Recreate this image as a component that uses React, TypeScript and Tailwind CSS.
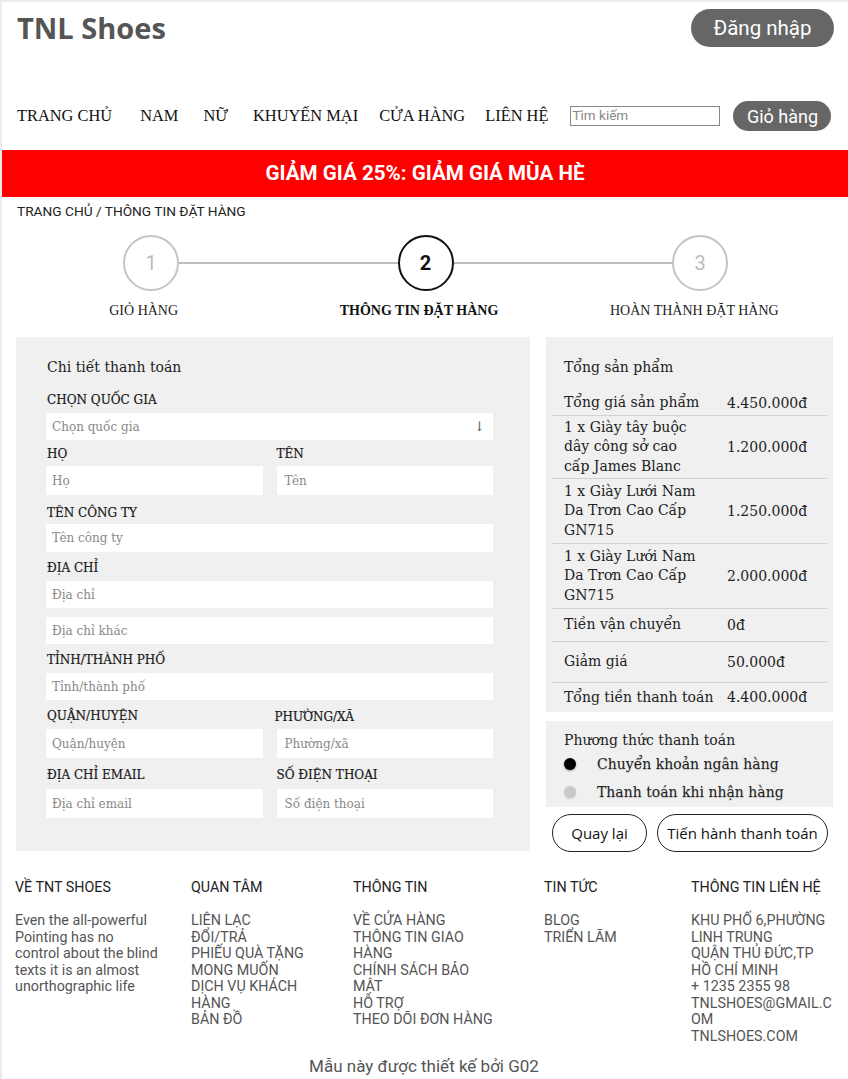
import React from "react";

const serif = "font-['DejaVu_Serif',serif]";
const times = "font-['Liberation_Serif',serif]";
const roboto = "font-['Roboto',sans-serif]";

function Label({ children, className = "" }: { children: React.ReactNode; className?: string }) {
  return (
    <div className={`${serif} text-[12px] leading-[16px] text-[#1a1a1a] [-webkit-text-stroke:0.2px_#1a1a1a] ${className}`}>{children}</div>
  );
}

function Field({ ph, h = 27, className = "" }: { ph: string; h?: number; className?: string }) {
  return (
    <div
      className={`bg-white flex items-center pl-[6px] ${serif} text-[12px] text-[#888] ${className}`}
      style={{ height: h }}
    >
      {ph}
    </div>
  );
}

function Row({ name, value, h, last = false }: { name: React.ReactNode; value: string; h: number; last?: boolean }) {
  return (
    <div
      className={`mx-[6px] px-[12px] flex items-center box-border ${last ? "" : "border-b border-[#d2d2d2]"}`}
      style={{ height: h }}
    >
      <div className="w-[163px] leading-[19.5px]">{name}</div>
      <div>{value}</div>
    </div>
  );
}

export default function App() {
  return (
    <div className="w-[848px] min-h-[1079px] bg-white border-t-2 border-l-2 border-[#ececec] box-border text-[#111]">
      {/* header */}
      <div className="flex justify-between items-center pl-[15px] pr-[14px] pt-[7px]">
        <div className="font-['Open_Sans',sans-serif] font-bold text-[29px] leading-[38px] text-[#555]">
          TNL Shoes
        </div>
        <div className={`w-[143px] h-[38px] rounded-full bg-[#666] text-white flex items-center justify-center ${roboto} text-[20.5px]`}>
          Đăng nhập
        </div>
      </div>

      {/* nav */}
      <div className="mt-[54px] flex items-center h-[30px] pl-[15px]">
        <div className={`flex items-center ${times} text-[16.4px] text-[#111]`}>
          <span className="mr-[28px]">TRANG CHỦ</span>
          <span className="mr-[25px]">NAM</span>
          <span className="mr-[25px]">NỮ</span>
          <span className="mr-[21px]">KHUYẾN MẠI</span>
          <span className="mr-[20px]">CỬA HÀNG</span>
          <span>LIÊN HỆ</span>
        </div>
        <div className={`ml-[22px] w-[150px] h-[20px] border border-[#888] flex items-center pl-[1px] ${roboto} text-[13.5px] text-[#888] leading-none`}>
          Tìm kiếm
        </div>
        <div className={`ml-[13px] w-[98px] h-[30px] rounded-full bg-[#666] text-white flex items-center justify-center ${roboto} text-[18px]`}>
          Giỏ hàng
        </div>
      </div>

      {/* banner */}
      <div className={`mt-[19px] h-[47px] bg-[#ff0000] text-white flex items-center justify-center ${roboto} font-bold text-[20.6px]`}>
        GIẢM GIÁ 25%: GIẢM GIÁ MÙA HÈ
      </div>

      {/* breadcrumb */}
      <div className={`mt-[6px] pl-[15px] ${roboto} text-[13.7px] leading-[16px] text-[#222]`}>
        TRANG CHỦ / THÔNG TIN ĐẶT HÀNG
      </div>

      {/* stepper */}
      <div className="mt-[16px] ml-[121px] w-[605px] flex items-center">
        <div className={`w-[56px] h-[56px] rounded-full border-2 border-[#c4c4c4] flex items-center justify-center ${roboto} text-[20px] text-[#bbb]`}>
          1
        </div>
        <div className="flex-1 h-[2px] bg-[#bdbdbd]" />
        <div className={`w-[56px] h-[56px] rounded-full border-2 border-[#111] flex items-center justify-center ${roboto} font-bold text-[20px] text-[#111]`}>
          2
        </div>
        <div className="flex-1 h-[2px] bg-[#bdbdbd]" />
        <div className={`w-[56px] h-[56px] rounded-full border-2 border-[#c4c4c4] flex items-center justify-center ${roboto} text-[20px] text-[#bbb]`}>
          3
        </div>
      </div>
      <div className={`mt-[12px] ml-[4px] w-[826px] grid grid-cols-3 ${times} text-[14px] leading-[16px] text-[#222]`}>
        <div className="text-center">GIỎ HÀNG</div>
        <div className="text-center font-bold text-[#111]">THÔNG TIN ĐẶT HÀNG</div>
        <div className="text-center">HOÀN THÀNH ĐẶT HÀNG</div>
      </div>

      {/* main */}
      <div className="mt-[18px] ml-[14px] flex items-start gap-[16px]">
        {/* left form */}
        <div className="w-[514px] bg-[#f0f0f0] pt-[20px] pb-[33px] pl-[30px] pr-[37px]">
          <div className={`${serif} text-[14px] leading-[20px] text-[#222] pl-[1px]`}>Chi tiết thanh toán</div>
          <Label className="mt-[15px] pl-[1px]">CHỌN QUỐC GIA</Label>
          <div className={`mt-[5px] h-[27px] bg-white flex items-center justify-between pl-[6px] pr-[8px] ${serif} text-[12px] text-[#888]`}>
            <span>Chọn quốc gia</span>
            <span className="text-[13px] text-[#555]">↓</span>
          </div>
          <div className="grid grid-cols-2 gap-x-[14px]">
            <div>
              <Label className="mt-[6px] pl-[1px]">HỌ</Label>
              <Field ph="Họ" h={29} className="mt-[4px]" />
            </div>
            <div>
              <Label className="mt-[6px]">TÊN</Label>
              <Field ph="Tên" h={29} className="mt-[4px] pl-[8px]" />
            </div>
          </div>
          <Label className="mt-[10px] pl-[1px]">TÊN CÔNG TY</Label>
          <Field ph="Tên công ty" h={28} className="mt-[3px]" />
          <Label className="mt-[8px] pl-[1px]">ĐỊA CHỈ</Label>
          <Field ph="Địa chỉ" h={27} className="mt-[5px]" />
          <Field ph="Địa chỉ khác" h={27} className="mt-[9px]" />
          <Label className="mt-[8px] pl-[1px]">TỈNH/THÀNH PHỐ</Label>
          <Field ph="Tỉnh/thành phố" h={27} className="mt-[5px]" />
          <div className="grid grid-cols-2 gap-x-[14px]">
            <div>
              <Label className="mt-[8px] pl-[1px]">QUẬN/HUYỆN</Label>
              <Field ph="Quận/huyện" h={29} className="mt-[5px]" />
            </div>
            <div>
              <Label className="mt-[9px] -ml-[2px]">PHƯỜNG/XÃ</Label>
              <Field ph="Phường/xã" h={29} className="mt-[4px] pl-[8px]" />
            </div>
          </div>
          <div className="grid grid-cols-2 gap-x-[14px]">
            <div>
              <Label className="mt-[9px] pl-[1px]">ĐỊA CHỈ EMAIL</Label>
              <Field ph="Địa chỉ email" h={29} className="mt-[6px]" />
            </div>
            <div>
              <Label className="mt-[9px]">SỐ ĐIỆN THOẠI</Label>
              <Field ph="Số điện thoại" h={29} className="mt-[6px] pl-[8px]" />
            </div>
          </div>
        </div>

        {/* right column */}
        <div className="w-[287px]">
          <div className={`bg-[#f0f0f0] pt-[20px] ${serif} text-[14px] text-[#222]`}>
            <div className="pl-[18px] leading-[20px]">Tổng sản phẩm</div>
            <div className="mt-[14px]">
              <Row name="Tổng giá sản phẩm" value="4.450.000đ" h={25} />
              <Row name={<>1 x Giày tây buộc<br />dây công sở cao<br />cấp James Blanc</>} value="1.200.000đ" h={63} />
              <Row name={<>1 x Giày Lưới Nam<br />Da Trơn Cao Cấp<br />GN715</>} value="1.250.000đ" h={65} />
              <Row name={<>1 x Giày Lưới Nam<br />Da Trơn Cao Cấp<br />GN715</>} value="2.000.000đ" h={65} />
              <Row name="Tiền vận chuyển" value="0đ" h={33} />
              <Row name="Giảm giá" value="50.000đ" h={41} />
              <Row name="Tổng tiền thanh toán" value="4.400.000đ" h={29} last />
            </div>
          </div>

          <div className={`mt-[9px] h-[86px] bg-[#f0f0f0] pt-[9px] pl-[18px] ${serif} text-[14px] text-[#222]`}>
            <div className="leading-[20px]">Phương thức thanh toán</div>
            <div className="h-[28px] flex items-center">
              <span className="w-[12px] h-[12px] rounded-full bg-black shadow-[0_1px_2px_rgba(0,0,0,0.4)]" />
              <span className="ml-[21px] [text-shadow:0_1px_1px_rgba(0,0,0,0.2)]">Chuyển khoản ngân hàng</span>
            </div>
            <div className="h-[28px] flex items-center">
              <span className="w-[12px] h-[12px] rounded-full bg-[#c8c8c8] shadow-[0_1px_2px_rgba(0,0,0,0.15)]" />
              <span className="ml-[21px] [text-shadow:0_1px_1px_rgba(0,0,0,0.2)]">Thanh toán khi nhận hàng</span>
            </div>
          </div>

          <div className="mt-[7px] ml-[6px] flex gap-[10px] font-['Open_Sans',sans-serif] text-[15px] text-[#111]">
            <div className="w-[95px] h-[38px] rounded-full border border-[#222] bg-white flex items-center justify-center">
              Quay lại
            </div>
            <div className="w-[171px] h-[38px] rounded-full border border-[#222] bg-white flex items-center justify-center">
              Tiến hành thanh toán
            </div>
          </div>
        </div>
      </div>

      {/* footer */}
      <div className={`mt-[27px] pl-[13px] flex items-start ${roboto} text-[14.3px]`}>
        <div className="w-[176px]">
          <div className="leading-[17px] text-[#222]">VỀ TNT SHOES</div>
          <div className="mt-[16px] w-[145px] leading-[16.5px] text-[#555]">
            Even the all-powerful Pointing has no<br />control about the blind texts it is an almost unorthographic life
          </div>
        </div>
        <div className="w-[162px]">
          <div className="leading-[17px] text-[#222]">QUAN TÂM</div>
          <div className="mt-[16px] w-[130px] leading-[16.5px] text-[#555]">
            <div>LIÊN LẠC</div>
            <div>ĐỔI/TRẢ</div>
            <div>PHIẾU QUÀ TẶNG</div>
            <div>MONG MUỐN</div>
            <div>DỊCH VỤ KHÁCH HÀNG</div>
            <div>BẢN ĐỒ</div>
          </div>
        </div>
        <div className="w-[191px]">
          <div className="leading-[17px] text-[#222]">THÔNG TIN</div>
          <div className="mt-[16px] w-[147px] leading-[16.5px] text-[#555]">
            <div>VỀ CỬA HÀNG</div>
            <div>THÔNG TIN GIAO HÀNG</div>
            <div>CHÍNH SÁCH BẢO MẬT</div>
            <div>HỖ TRỢ</div>
            <div>THEO DÕI ĐƠN HÀNG</div>
          </div>
        </div>
        <div className="w-[147px]">
          <div className="leading-[17px] text-[#222]">TIN TỨC</div>
          <div className="mt-[16px] leading-[16.5px] text-[#555]">
            <div>BLOG</div>
            <div>TRIỂN LÃM</div>
          </div>
        </div>
        <div className="w-[145px]">
          <div className="leading-[17px] text-[#222]">THÔNG TIN LIÊN HỆ</div>
          <div className="mt-[16px] w-[144px] leading-[16.5px] text-[#555]">
            <div>KHU PHỐ 6,PHƯỜNG LINH TRUNG</div>
            <div>QUẬN THỦ ĐỨC,TP HỒ CHÍ MINH</div>
            <div>+ 1235 2355 98</div>
            <div className="break-all">TNLSHOES@GMAIL.COM</div>
            <div>TNLSHOES.COM</div>
          </div>
        </div>
      </div>
      <div className={`mt-[13px] text-center ${roboto} text-[17px] leading-[19px] text-[#555] pr-[2px]`}>
        Mẫu này được thiết kế bởi G02
      </div>
    </div>
  );
}
